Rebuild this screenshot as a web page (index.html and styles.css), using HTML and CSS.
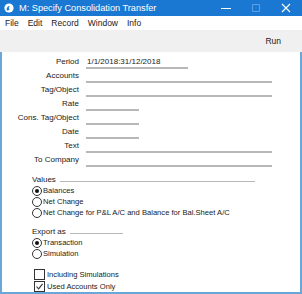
FILE: index.html
```html
<!DOCTYPE html>
<html lang="en">
<head>
<meta charset="UTF-8" />
<title>M: Specify Consolidation Transfer</title>
<link rel="stylesheet" href="styles.css">
</head>
<body>

<div class="window">
  <div class="titlebar">
    <svg class="app-icon" width="10" height="10" viewBox="0 0 10 10">
      <circle cx="5" cy="5" r="4.6" fill="#fff"/>
      <path d="M3 7.5 C2 5.5 3.5 2.8 6 3 C4.6 3.8 4.4 5.5 5.6 6.2 C4.8 7.4 3.8 7.8 3 7.5 Z" fill="#1a78d2"/>
    </svg>
    <span class="title">M: Specify Consolidation Transfer</span>
    <div class="controls">
      <svg width="10" height="10" viewBox="0 0 10 10"><path d="M0 5.5 H10" stroke="#fff" stroke-width="1"/></svg>
      <svg class="dim" width="10" height="10" viewBox="0 0 10 10"><rect x="1.5" y="1.5" width="7" height="7" fill="none" stroke="#5aa0e0" stroke-width="1"/></svg>
      <svg width="10" height="10" viewBox="0 0 10 10"><path d="M1 1 L9 9 M9 1 L1 9" stroke="#fff" stroke-width="1.1"/></svg>
    </div>
  </div>

  <div class="menubar">
    <span>File</span>
    <span>Edit</span>
    <span>Record</span>
    <span>Window</span>
    <span>Info</span>
  </div>

  <div class="toolbar">
    <span class="run">Run</span>
  </div>

  <div class="content">
    <div class="form">
      <label>Period</label><div class="field mid">1/1/2018:31/12/2018</div>
      <label>Accounts</label><div class="field long"></div>
      <label>Tag/Object</label><div class="field long"></div>
      <label>Rate</label><div class="field short"></div>
      <label>Cons. Tag/Object</label><div class="field short"></div>
      <label>Date</label><div class="field short"></div>
      <label>Text</label><div class="field long"></div>
      <label>To Company</label><div class="field long"></div>
    </div>

    <div class="group values">
      <div class="group-head"><span>Values</span><span class="rule"></span></div>
      <div class="radio on"><span class="dot"></span>Balances</div>
      <div class="radio"><span class="dot"></span>Net Change</div>
      <div class="radio"><span class="dot"></span>Net Change for P&amp;L A/C and Balance for Bal.Sheet A/C</div>
    </div>

    <div class="group export">
      <div class="group-head"><span>Export as</span><span class="rule"></span></div>
      <div class="radio on"><span class="dot"></span>Transaction</div>
      <div class="radio"><span class="dot"></span>Simulation</div>
    </div>

    <div class="checks">
      <div class="check"><span class="box"></span>Including Simulations</div>
      <div class="check on"><span class="box">
        <svg width="9" height="9" viewBox="0 0 9 9"><path d="M1.5 4.5 L3.6 6.8 L7.6 1.8" fill="none" stroke="#333" stroke-width="1.1"/></svg>
      </span>Used Accounts Only</div>
    </div>
  </div>
</div>

</body>
</html>
```

FILE: styles.css
```css
body {
  margin: 0;
  background: #fff;
  font-family: 'Liberation Sans', Arial, sans-serif;
  font-size: 8px;
  color: #1a1a1a;
}
.window {
  width: 302px;
  height: 294px;
  display: flex;
  flex-direction: column;
}
.titlebar {
  height: 17px;
  background: #1a78d2;
  color: #fff;
  display: flex;
  align-items: center;
  padding-left: 4px;
  font-size: 9.2px;
}
.app-icon {
  margin-right: 5px;
}
.title {
  flex: 1;
}
.controls {
  display: flex;
  align-items: center;
  gap: 20px;
  margin-right: 11px;
}
.menubar {
  height: 14px;
  display: flex;
  align-items: center;
  gap: 9px;
  padding-left: 5px;
  font-size: 8.5px;
}
.toolbar {
  height: 23px;
  background: #f0f0f0;
  display: flex;
  align-items: center;
  justify-content: flex-end;
  padding-right: 21px;
  font-size: 8.5px;
}
.content {
  flex: 1;
  border: 2px solid #6aa6d8;
  border-top: none;
  padding-top: 3px;
}
.form {
  display: grid;
  grid-template-columns: 77px auto;
  column-gap: 7px;
  grid-auto-rows: 14px;
  justify-items: start;
}
.form label {
  justify-self: end;
  line-height: 14px;
}
.field {
  height: 12px;
  line-height: 13px;
  border-bottom: 2px solid #b8b8b8;
  padding-left: 1px;
  box-sizing: content-box;
}
.field.mid { width: 101px; }
.field.long { width: 185px; }
.field.short { width: 52px; }

.group {
  margin-left: 30px;
}
.values {
  margin-top: 7px;
  width: 223px;
}
.export {
  margin-top: 8px;
  width: 91px;
}
.group-head {
  display: flex;
  align-items: center;
  height: 11px;
}
.group-head .rule {
  flex: 1;
  margin-left: 4px;
  margin-top: 3px;
  border-bottom: 1px solid #b8b8b8;
}
.radio {
  height: 11px;
  display: flex;
  align-items: center;
  white-space: nowrap;
  font-size: 7.6px;
}
.dot {
  flex-shrink: 0;
  width: 8px;
  height: 8px;
  border: 1px solid #333;
  border-radius: 50%;
  margin-right: 1px;
  display: flex;
  align-items: center;
  justify-content: center;
}
.radio.on .dot::after {
  content: '';
  width: 4px;
  height: 4px;
  border-radius: 50%;
  background: #111;
}
.checks {
  margin-top: 9px;
  margin-left: 32px;
}
.check {
  height: 12px;
  display: flex;
  align-items: center;
  font-size: 7.6px;
}
.box {
  flex-shrink: 0;
  width: 9px;
  height: 9px;
  border: 1px solid #333;
  margin-right: 2px;
  display: flex;
  align-items: center;
  justify-content: center;
}
```
